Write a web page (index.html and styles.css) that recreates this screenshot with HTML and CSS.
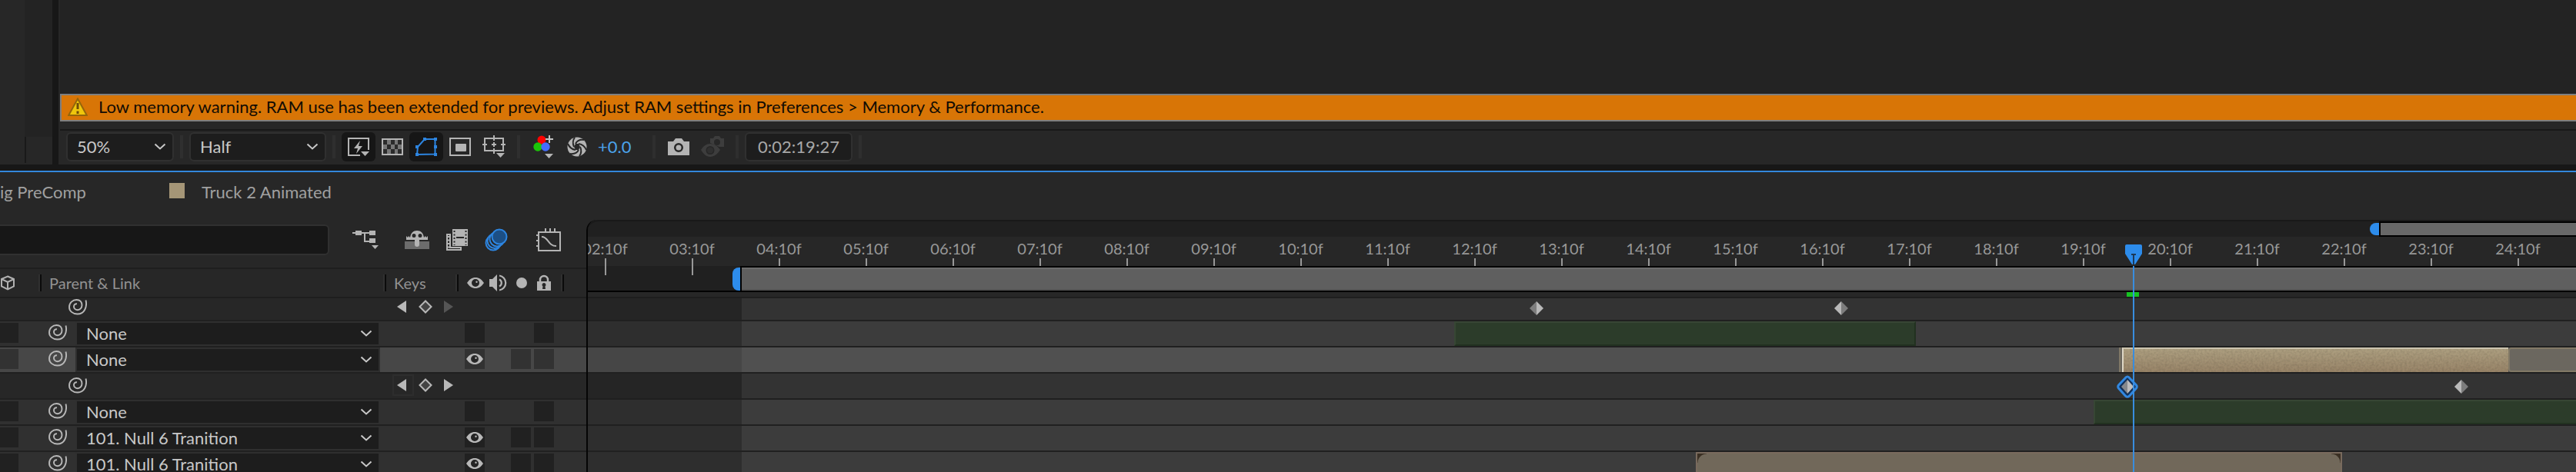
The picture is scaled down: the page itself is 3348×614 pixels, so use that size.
FILE: index.html
```html
<!DOCTYPE html>
<html lang="en">
<head>
<meta charset="utf-8">
<title>Truck 2 Animated</title>
<link rel="stylesheet" href="styles.css">
</head>
<body>
<svg class="defs" aria-hidden="true">
  <symbol id="chevron" viewBox="0 0 16 10"><path d="M1.500 1.500L8 7.500l6.500-6" fill="none" stroke="currentColor" stroke-width="2"/></symbol>
  <symbol id="spiral" viewBox="0 0 24 21"><path d="M22.500 1.500C24.500 10 21 19.500 11.500 19.500C5.500 19.500 1 15.500 1 10.500C1 5 5.500 1 10.500 1C15 1 17.500 4 17.500 8C17.500 11.500 15 14.200 12 14.200C9 14.200 7 12.200 7 9.800C7 7.500 8.800 6 11 6.300" fill="none" stroke="currentColor" stroke-width="1.900"/></symbol>
  <symbol id="eye" viewBox="0 0 22 14"><path fill="currentColor" fill-rule="evenodd" d="M0 7C3 2.500 6.500 0 11 0s8 2.500 11 7c-3 4.500-6.500 7-11 7S3 11.500 0 7zm11-5a5 5 0 1 0 0 10a5 5 0 0 0 0-10z"/><circle cx="11" cy="7" r="3.600" fill="#242424"/><circle cx="12.500" cy="5.800" r="1.200" fill="currentColor"/></symbol>
  <symbol id="left" viewBox="0 0 12 16"><path d="M12 0v16L0 8z" fill="currentColor"/></symbol>
  <symbol id="right" viewBox="0 0 12 16"><path d="M0 0v16l12-8z" fill="currentColor"/></symbol>
  <symbol id="diamond" viewBox="0 0 18 18"><path d="M9 1.500L16.500 9L9 16.500L1.500 9z" fill="#444" stroke="currentColor" stroke-width="2"/></symbol>
  <symbol id="ease-in" viewBox="0 0 18 18"><path d="M9 0v18L0 9z" fill="#7d7d7d"/><path d="M9 0v18l9-9z" fill="#b9b9b9"/></symbol>
  <symbol id="ease-out" viewBox="0 0 18 18"><path d="M9 0v18L0 9z" fill="#b9b9b9"/><path d="M9 0v18l9-9z" fill="#7d7d7d"/></symbol>
</svg>

<div class="app">
  <section class="upper">
    <aside class="side"><div class="side-main"></div><div class="side-top"></div><div class="side-foot"></div></aside>
    <main class="viewer">
      <div class="canvas"></div>
      <div class="warning" role="alert">
        <svg width="26" height="24" viewBox="0 0 26 24"><path d="M13 1.500L24.800 23H1.200z" fill="#efc60c" stroke="#95660a" stroke-width="2"/><path d="M11.500 7h3v8h-3zM11.500 17.500h3V21h-3z" fill="#704c08"/></svg>
        <span>Low memory warning. RAM use has been extended for previews. Adjust RAM settings in Preferences &gt; Memory &amp; Performance.</span>
      </div>
      <div class="toolbar">
        <div class="drop zoom"><select aria-label="Magnification"><option>50%</option></select><svg width="16" height="10"><use href="#chevron"/></svg></div>
        <i class="sep"></i>
        <div class="drop res"><select aria-label="Resolution"><option>Half</option></select><svg width="16" height="10"><use href="#chevron"/></svg></div>
        <i class="sep"></i>
        <div class="tools">
          <button class="tool on" aria-label="Fast previews"><svg width="30" height="26" viewBox="0 0 30 26"><path d="M17 24H2V2h26v15" fill="none" stroke="currentColor" stroke-width="2"/><path d="M17 5l-8 10h5l-2 7 8-10h-5z" fill="currentColor"/><path d="M18 19h11l-5.500 6z" fill="currentColor"/></svg></button>
          <button class="tool" aria-label="Transparency grid"><svg width="28" height="24" viewBox="0 0 28 24"><path d="M1 2h26v20H1z" fill="#2b2b2b" stroke="currentColor" stroke-width="2"/><path d="M7 3h5v6H7zM17 3h4v6h-4zM2 9h5v6H2zM12 9h5v6h-5zM21 9h5v6h-5zM7 15h5v6H7zM17 15h4v6h-4z" fill="#777"/></svg></button>
          <button class="tool on blue" aria-label="Mask and shape path visibility"><svg width="30" height="26" viewBox="0 0 30 26"><path d="M3 23L4 13L13 3h13.500v19.500z" fill="none" stroke="currentColor" stroke-width="2"/><path d="M1 11h4v4H1zM11 1h4v4h-4zM25 1h4v4h-4zM25 11h4v4h-4zM1 21h4v4H1zM25 21h4v4h-4z" fill="currentColor"/></svg></button>
          <button class="tool" aria-label="Region of interest"><svg width="28" height="24" viewBox="0 0 28 24"><path d="M1 1h26v22H1z" fill="none" stroke="currentColor" stroke-width="2"/><rect x="8" y="8" width="14" height="10" rx="1" fill="currentColor"/></svg></button>
          <button class="tool" aria-label="Grid and guide options"><svg width="30" height="30" viewBox="0 0 30 30"><path d="M3 4h24v16H3z" fill="none" stroke="currentColor" stroke-width="2"/><path d="M15 0v7M15 17v7M0 12h6M24 12h6M12 12h6M15 9v6" stroke="currentColor" stroke-width="2"/><path d="M18 23h11l-5.500 6z" fill="currentColor"/></svg></button>
        </div>
        <i class="sep"></i>
        <div class="exposure">
          <button class="tool" aria-label="Channel settings"><svg width="28" height="30" viewBox="0 0 28 30"><circle cx="11" cy="6" r="5.500" fill="#fc0300"/><circle cx="6" cy="15" r="5.700" fill="#1cc409"/><circle cx="16" cy="15" r="5.700" fill="#456dfb"/><path d="M21 0v10M16 5h10" stroke="#c4c4c4" stroke-width="2"/><path d="M15 24h11l-5.500 6z" fill="currentColor"/></svg></button>
          <button class="tool" aria-label="Reset exposure"><svg width="26" height="26" viewBox="0 0 26 26"><circle cx="13" cy="13" r="12.500" fill="currentColor"/><path d="M17 13l-2 4-4 0-2-4 2-4 4 0z" fill="#272727"/><path d="M11 9Q14 3 22 4M15 9Q22 10 25 17M17 13Q20 20 16 25M15 17Q12 23 4 22M11 17Q4 16 1 9M9 13Q6 6 10 1" fill="none" stroke="#272727" stroke-width="2"/></svg></button>
          <button class="value">+0.0</button>
        </div>
        <i class="sep"></i>
        <div class="snap">
          <button class="tool" aria-label="Take snapshot"><svg width="28" height="24" viewBox="0 0 28 24"><path fill="currentColor" fill-rule="evenodd" d="M0 5h7l3-4h8l3 4h7v18H0zM14 7a6 6 0 1 0 0 12a6 6 0 0 0 0-12z"/><circle cx="14" cy="13" r="3.500" fill="currentColor"/></svg></button>
          <button class="tool" aria-label="Show snapshot" disabled><svg width="30" height="28" viewBox="0 0 30 28"><path fill="#3d3d3d" fill-rule="evenodd" d="M0 18C3 13 7 10 12 10s10 3 13 8c-3 5-8 9-13 9S3 23 0 18zm12-5a5.500 5.500 0 1 0 0 11a5.500 5.500 0 0 0 0-11z"/><circle cx="12" cy="18.500" r="4" fill="#303030"/><path fill="#3d3d3d" fill-rule="evenodd" d="M12 3h4l2-3h6l2 3h4v11h-6L12 9zm9 1a4 4 0 1 0 0 8a4 4 0 0 0 0-8z"/></svg></button>
        </div>
        <i class="sep"></i>
        <button class="timecode">0:02:19:27</button>
        <i class="sep"></i>
      </div>
    </main>
  </section>

  <section class="timeline">
    <nav class="tabs">
      <a class="tab first" href="#precomp">ig PreComp</a>
      <a class="tab" href="#truck"><i class="swatch"></i>Truck 2 Animated</a>
    </nav>
    <div class="panel">
      <div class="layers">
        <div class="searchbar">
          <input class="search" type="text" aria-label="Search layers">
          <button class="tool" aria-label="Mini-flowchart"><svg width="34" height="26" viewBox="0 0 34 26"><path d="M0 4h30M16 4v11h6" fill="none" stroke="currentColor" stroke-width="2"/><path d="M4 1h8v6H4zM22 1h8v6h-8zM22 11h8v6h-8z" fill="currentColor"/><path d="M25 20h9l-4.500 5z" fill="currentColor"/></svg></button>
          <button class="tool" aria-label="Hide shy layers"><svg width="32" height="26" viewBox="0 0 32 26"><path d="M0 15h32v10H0z" fill="#6c6c6c"/><path fill="currentColor" fill-rule="evenodd" d="M2 13V8l2 2 1-2 2 2C8 4 11 1 16 1s8 3 9 9l2-2 1 2 2-2v5zM12 5a2.500 2.500 0 1 0 0 5a2.500 2.500 0 0 0 0-5zM20 5a2.500 2.500 0 1 0 0 5a2.500 2.500 0 0 0 0-5z"/><path d="M13 11h6v8a3 3 0 0 1-6 0z" fill="currentColor"/></svg></button>
          <button class="tool" aria-label="Frame blending"><svg width="28" height="28" viewBox="0 0 28 28"><path d="M8 0h20v22H8z" fill="currentColor"/><path d="M1 6v21h18v-3M5 6v18h15M1 7h4" fill="none" stroke="currentColor" stroke-width="2"/><path d="M13 11h10" stroke="#272727" stroke-width="2"/><path d="M10.500 2v19M25.500 2v19" stroke="#272727" stroke-width="2" stroke-dasharray="2 2.500"/><path d="M3 9v17" stroke="currentColor" stroke-width="3" stroke-dasharray="2 2.500"/></svg></button>
          <button class="tool blue" aria-label="Motion blur"><svg width="30" height="30" viewBox="0 0 30 30"><g fill="#272727" stroke="currentColor" stroke-width="2"><circle cx="11" cy="19" r="9.500"/><circle cx="13" cy="16.500" r="9.500"/><circle cx="16" cy="14" r="9.500"/><circle cx="19" cy="11" r="9.500" fill="#1c4f85"/></g></svg></button>
          <button class="tool" aria-label="Graph editor"><svg width="32" height="30" viewBox="0 0 32 30"><path d="M3 5h28v24H3zM7 11c9 0 8 12 19 12M12 4V0M18 4V0M24 4V0M0 9h3M0 16h3M0 23h3" fill="none" stroke="currentColor" stroke-width="2"/></svg></button>
        </div>
        <div class="heads">
          <span class="h-cube"><svg width="20" height="20" viewBox="0 0 20 20"><path d="M10 1.500l8 3.500v9.500l-8 4-8-4V5zM2 5l8 4 8-4M10 9v9.500" fill="none" stroke="#b0b0b0" stroke-width="2"/></svg></span>
          <span class="h-parent">Parent &amp; Link</span>
          <span class="h-keys">Keys</span>
          <span class="h-av">
            <svg width="22" height="14"><use href="#eye"/></svg>
            <svg width="24" height="22" viewBox="0 0 24 22"><path d="M0 6h4l6-6v22l-6-6H0z" fill="currentColor"/><path d="M13 6.500a5 5 0 0 1 0 9M13 1.500a9.600 9.600 0 0 1 0 19" fill="none" stroke="currentColor" stroke-width="2.200"/></svg>
            <svg width="14" height="14" viewBox="0 0 14 14"><circle cx="7" cy="7" r="7" fill="currentColor"/></svg>
            <svg width="18" height="22" viewBox="0 0 18 22"><path d="M4 10V7a5 5 0 0 1 10 0v3" fill="none" stroke="currentColor" stroke-width="2.500"/><path fill="currentColor" fill-rule="evenodd" d="M0 9h18v12H0zm9 2a2.500 2.500 0 0 0-1.500 4.500L7 19h4l-.5-3.500A2.500 2.500 0 0 0 9 11z"/></svg>
          </span>
          <span class="h-end"></span>
        </div>
        <div class="rows">
          <div class="row prop">
            <span></span><span class="pick"><svg width="24" height="21"><use href="#spiral"/></svg></span>
            <span class="keys"><button class="nav" aria-label="Previous keyframe"><svg width="12" height="16"><use href="#left"/></svg></button><button class="nav" aria-label="Keyframe"><svg width="18" height="18"><use href="#diamond"/></svg></button><button class="nav" aria-label="Next keyframe" disabled><svg width="12" height="16"><use href="#right"/></svg></button></span>
          </div>
          <div class="row">
            <button class="box cube" aria-label="3D layer"></button><span class="pick"><svg width="24" height="21"><use href="#spiral"/></svg></span>
            <div class="drop parent"><select aria-label="Parent"><option>None</option></select><svg width="16" height="10"><use href="#chevron"/></svg></div>
            <span class="switches"><button class="box vis" aria-label="Visible"></button><button class="box lock" aria-label="Lock"></button></span>
          </div>
          <div class="row selected">
            <button class="box cube" aria-label="3D layer"></button><span class="pick"><svg width="24" height="21"><use href="#spiral"/></svg></span>
            <div class="drop parent"><select aria-label="Parent"><option>None</option></select><svg width="16" height="10"><use href="#chevron"/></svg></div>
            <span class="switches"><button class="box vis" aria-label="Visible"><svg width="22" height="14"><use href="#eye"/></svg></button><button class="box solo" aria-label="Solo"></button><button class="box lock" aria-label="Lock"></button></span>
          </div>
          <div class="row prop">
            <span></span><span class="pick"><svg width="24" height="21"><use href="#spiral"/></svg></span>
            <span class="keys"><button class="nav framed" aria-label="Previous keyframe"><svg width="12" height="16"><use href="#left"/></svg></button><button class="nav" aria-label="Keyframe"><svg width="18" height="18"><use href="#diamond"/></svg></button><button class="nav" aria-label="Next keyframe"><svg width="12" height="16"><use href="#right"/></svg></button></span>
          </div>
          <div class="row">
            <button class="box cube" aria-label="3D layer"></button><span class="pick"><svg width="24" height="21"><use href="#spiral"/></svg></span>
            <div class="drop parent"><select aria-label="Parent"><option>None</option></select><svg width="16" height="10"><use href="#chevron"/></svg></div>
            <span class="switches"><button class="box vis" aria-label="Visible"></button><button class="box lock" aria-label="Lock"></button></span>
          </div>
          <div class="row">
            <button class="box cube" aria-label="3D layer"></button><span class="pick"><svg width="24" height="21"><use href="#spiral"/></svg></span>
            <div class="drop parent"><select aria-label="Parent"><option>101. Null 6 Tranition</option></select><svg width="16" height="10"><use href="#chevron"/></svg></div>
            <span class="switches"><button class="box vis" aria-label="Visible"><svg width="22" height="14"><use href="#eye"/></svg></button><button class="box solo" aria-label="Solo"></button><button class="box lock" aria-label="Lock"></button></span>
          </div>
          <div class="row">
            <button class="box cube" aria-label="3D layer"></button><span class="pick"><svg width="24" height="21"><use href="#spiral"/></svg></span>
            <div class="drop parent"><select aria-label="Parent"><option>101. Null 6 Tranition</option></select><svg width="16" height="10"><use href="#chevron"/></svg></div>
            <span class="switches"><button class="box vis" aria-label="Visible"><svg width="22" height="14"><use href="#eye"/></svg></button><button class="box solo" aria-label="Solo"></button><button class="box lock" aria-label="Lock"></button></span>
          </div>
        </div>
      </div>

      <div class="time">
        <div class="ruler">
          <div class="navigator"><i class="nav-handle"></i><i class="nav-range"></i></div>
          <div class="scale">
            <span>02:10f</span><span>03:10f</span><span>04:10f</span><span>05:10f</span><span>06:10f</span><span>07:10f</span><span>08:10f</span><span>09:10f</span><span>10:10f</span><span>11:10f</span><span>12:10f</span><span>13:10f</span><span>14:10f</span><span>15:10f</span><span>16:10f</span><span>17:10f</span><span>18:10f</span><span>19:10f</span><span>20:10f</span><span>21:10f</span><span>22:10f</span><span>23:10f</span><span>24:10f</span>
          </div>
          <div class="workarea"><i class="ticks"></i><i class="work-handle"></i><i class="work-range"></i></div>
        </div>
        <div class="rows tracks">
          <div class="row prop"><svg class="key" style="left:1224px" width="18" height="18"><use href="#ease-in"/></svg><svg class="key" style="left:1620px" width="18" height="18"><use href="#ease-out"/></svg></div>
          <div class="row"><i class="bar green" style="left:1126px;width:600px"></i></div>
          <div class="row selected"><i class="bar trim" style="left:1990px;width:6px"></i><i class="bar rest" style="left:2496px;right:-8px"></i>
            <div class="bar tan" style="left:1994px;width:502px"><svg width="100%" height="100%"><filter id="grain" x="0" y="0" width="100%" height="100%"><feTurbulence type="fractalNoise" baseFrequency="0.35" numOctaves="2" seed="4"/><feColorMatrix values="0 0 0 0 0  0 0 0 0 0  0 0 0 0 0  1 0 0 0 -0.35"/></filter><rect width="100%" height="100%" filter="url(#grain)" opacity="0.2"/></svg></div>
          </div>
          <div class="row prop"><svg class="key active" style="left:1986px" width="30" height="30" viewBox="0 0 30 30"><path d="M15 2Q16.500 2 18 4L26.500 13Q28 15 26.500 17L18 26.500Q15 30 12 26.500L3.500 17Q2 15 3.500 13L12 4Q13.500 2 15 2z" fill="#12315a" stroke="#3288e0" stroke-width="3"/><path d="M15 6v18L7 15z" fill="#85888c"/><path d="M15 6v18l8-9z" fill="#bcbcbc"/></svg><svg class="key" style="left:2426px" width="18" height="18"><use href="#ease-out"/></svg></div>
          <div class="row"><i class="bar green" style="left:1957px;right:-8px"></i></div>
          <div class="row"></div>
          <div class="row"><i class="bar brown" style="left:1440px;width:840px"></i></div>
        </div>
        <div class="playhead" style="left:1998px"><i class="cached"></i><i class="line"></i><svg width="22" height="26" viewBox="0 0 22 26"><path d="M2 0h18q2 0 2 2v10l-9 14h-4L0 12V2q0-2 2-2z" fill="#2d8ceb"/><path d="M8 13h6M11 13v13" stroke="#1c3957" stroke-width="2"/></svg></div>
      </div>
    </div>
  </section>
</div>
</body>
</html>
```

FILE: styles.css
```css
* { box-sizing: border-box; }
body {
  margin: 0;
  background: #272727;
  color: #c4c4c4;
  font-family: Lato, "Open Sans", sans-serif;
  font-size: 22px;
  line-height: 28px;
}
svg { display: block; flex: none; }
.defs { position: absolute; width: 0; height: 0; }
button { border: 0; padding: 0; background: none; color: inherit; font: inherit; display: grid; place-items: center; }
.app { height: 100vh; overflow: hidden; display: flex; flex-direction: column; }

/* Viewer */
.upper { display: grid; grid-template-columns: 68px 1fr; flex: none; background: #171717; column-gap: 8px; padding-bottom: 8px; }
.side { display: grid; grid-template-columns: 32px 1fr; grid-template-rows: 178px 1fr; background: #272727; }
.side-main { grid-row: span 2; }
.side-top { background: #232323; }
.side-foot { border-left: 2px solid #191919; margin-bottom: 2px; }
.viewer { background: #272727; padding-left: 2px; min-width: 0; }
.canvas { height: 122px; background: #232323; }
.warning {
  display: flex; align-items: center; gap: 14px;
  height: 36px; padding: 0 8px 2px; border: 2px solid #7f7f7f; border-right: 0;
  background: #d87506; color: #120c04; white-space: nowrap;
}
.toolbar { display: flex; align-items: center; gap: 8px; margin-top: 10px; height: 46px; padding: 0 8px 2px; border-top: 2px solid #191919; color: #b4b4b4; }
.sep { width: 4px; height: 30px; background: #2f2f2f; flex: none; }
.drop { display: grid; grid-template-columns: 1fr 16px; align-items: center; border: 2px solid #303030; border-radius: 6px; background: #1d1d1d; color: #c8c8c8; }
.drop select {
  grid-area: 1 / 1 / 2 / 3; width: 100%; height: 100%; padding: 0 0 0 12px; border: 0; background: none;
  appearance: none; color: inherit; font: inherit;
}
.drop svg { grid-area: 1 / 2; pointer-events: none; }
.zoom, .res { height: 38px; padding-right: 8px; }
.zoom { width: 140px; }
.res { width: 178px; }
.tool { height: 38px; flex: none; }
.tools { display: grid; grid-template-columns: 44px 44px 44px 44px 44px; }
.tools .tool { border-radius: 6px; }
.tool.on { background: #161616; }
.blue { color: #2d85e0; }
.exposure { display: grid; grid-template-columns: 46px 40px 70px; }
.value { color: #4ba3ea; justify-items: start; padding-left: 7px; }
.snap { display: grid; grid-template-columns: 44px 44px; }
.timecode { width: 140px; height: 38px; border: 2px solid #303030; border-radius: 6px; background: #1d1d1d; color: #a8a8a8; }

/* Timeline panel */
.timeline { flex: 1; min-height: 0; border-top: 2px solid #3387dc; display: flex; flex-direction: column; }
.tabs { display: flex; height: 62px; padding-top: 12px; flex: none; }
.tab { display: flex; gap: 22px; color: #a0a0a0; text-decoration: none; white-space: nowrap; }
.tab.first { width: 220px; }
.swatch { width: 20px; height: 20px; margin-top: 2px; background: #a59677; }
.panel { flex: 1; min-height: 0; display: grid; grid-template-columns: 762px minmax(0, 1fr); grid-template-rows: minmax(0, 1fr); }
.layers { display: flex; flex-direction: column; min-height: 0; }
.searchbar { display: grid; grid-template-columns: 428px 94px 40px 64px 38px 98px; height: 62px; flex: none; padding-top: 6px; align-items: start; color: #b4b4b4; }
.search { height: 40px; width: 100%; border: 2px solid #303030; border-left: 0; border-radius: 0 6px 6px 0; background: #171717; color: #c8c8c8; font: inherit; outline: 0; }
.searchbar .tool { height: 40px; }
.heads { display: grid; grid-template-columns: 50px 448px 94px 137px 1fr; height: 40px; flex: none; border-top: 2px solid #1e1e1e; border-bottom: 2px solid #1e1e1e; font-size: 20px; color: #929292; padding: 7px 0; }
.heads > span { display: flex; align-items: center; white-space: nowrap; height: 22px; }
.heads > span + span { border-left: 2px solid #303030; box-shadow: inset 2px 0 #0b0b0b; }
.h-parent { padding-left: 12px; }
.h-keys { padding-left: 12px; }
.h-av { padding-left: 13px; gap: 7px; color: #b4b4b4; }
.h-av svg:nth-child(3) { margin: 0 6px 0 4px; }
.rows { flex: 1; min-height: 0; overflow: hidden; }
.row { height: 34px; border-bottom: 2px solid #202020; background: #303030; color: #b8b8b8; }
.row:first-child { margin-top: -4px; }
.row.prop { background: #272727; }
.row.selected { background: #474747; }
.layers .row { display: grid; grid-template-columns: 24px 74px 396px 1fr; }
.pick { padding: 4px 0 0 39px; }
.prop .pick { padding-left: 65px; padding-top: 5px; }
.prop .pick svg { overflow: visible; }
.parent { border-color: #2f2f2f; border-radius: 0; padding-right: 8px; }
.box { width: 26px; height: 26px; margin-top: 2px; background: #212121; }
.selected .box { background: #323232; }
.cube { width: 24px; }
.switches { display: grid; grid-template-columns: 56px 26px 26px; column-gap: 4px; padding-left: 110px; }
.solo { grid-column: 2; }
.lock { grid-column: 3; }
.keys { grid-column: 4; display: grid; grid-template-columns: 28px 30px 30px; padding-left: 16px; padding-top: 1px; }
.nav { height: 28px; }
.nav:first-child { padding-right: 4px; }
.nav:disabled { color: #555; }
.framed { border: 2px solid #2d2d2d; }

/* Ruler and tracks */
.time { position: relative; display: flex; flex-direction: column; min-height: 0; overflow: hidden; border-left: 2px solid #050505; }
.ruler { flex: none; height: 102px; border-bottom: 2px solid #1e1e1e; }
.time, .ruler, .navigator { border-top-left-radius: 14px; }
.navigator { height: 22px; border-top: 2px solid #191919; background: #202020; display: grid; grid-template-columns: 2316px 12px 1fr; }
.nav-handle { grid-column: 2; height: 16px; margin-top: 2px; border-radius: 8px 0 0 8px; background: #2d8ceb; }
.nav-range { border: 2px solid #000; border-right: 0; background: #686868; }
.scale { display: flex; height: 38px; margin-left: -34px; overflow: hidden; background: #272727; }
.scale span { width: 113px; flex: none; text-align: center; font-size: 20px; color: #989898; padding-top: 1px; background: linear-gradient(#989898, #989898) 56px 100% / 2px 10px no-repeat; }
.workarea { height: 34px; display: grid; grid-template-columns: 188px 10px 1fr; background: #202020; border-bottom: 2px solid #000; }
.ticks { height: 12px; background: repeating-linear-gradient(90deg, transparent 0 22px, #989898 22px 24px, transparent 24px 113px); }
.work-handle { margin-top: 2px; border-radius: 8px 0 0 8px; background: #2d8ceb; }
.work-range { border-top: 2px solid #000; border-left: 2px solid #000; background: #5f5f5f; box-shadow: inset 0 2px #6c6c6c, inset 0 -2px #545454; }
.tracks .row { position: relative; background: linear-gradient(90deg, #2e2e2e 200px, #3c3c3c 200px); }
.tracks .row.prop { background: linear-gradient(90deg, #252525 200px, #333 200px); }
.tracks .row.selected { background: linear-gradient(90deg, #464646 200px, #505050 200px); }
.bar { position: absolute; top: 0; bottom: 0; overflow: hidden; }
.green { background: #2c3c2a; border: 2px solid; border-color: #374634 #223120 #223120 #374634; }
.trim { border-left: 2px solid #7f7766; background: #6a665d; }
.tan { background: linear-gradient(#ad9f80, #988468); border-top: 2px solid #cbc3ae; border-left: 2px solid #ddd6c5; }
.rest { background: #6b675f; border: 2px solid #827966; border-radius: 4px; }
.brown { background: radial-gradient(circle at 12px 12px, #71685a 11px, transparent 12px) 0 0 / 12px 12px no-repeat, radial-gradient(circle at 0 12px, #71685a 11px, transparent 12px) 100% 0 / 12px 12px no-repeat, linear-gradient(90deg, #3b3024 12px, #71685a 12px calc(100% - 12px), #3b3024 calc(100% - 12px)) 0 0 / 100% 12px no-repeat, #71685a; border: 2px solid #796a5d; border-bottom: 0; }
.key { position: absolute; top: 8px; }
.key.active { top: 2px; }
.playhead { position: absolute; top: 32px; bottom: 0; width: 22px; }
.playhead .line { position: absolute; left: 10px; top: 28px; bottom: 0; width: 2px; background: #388ddf; }
.playhead .cached { position: absolute; left: 2px; top: 62px; width: 16px; height: 6px; background: #16c321; }
```
